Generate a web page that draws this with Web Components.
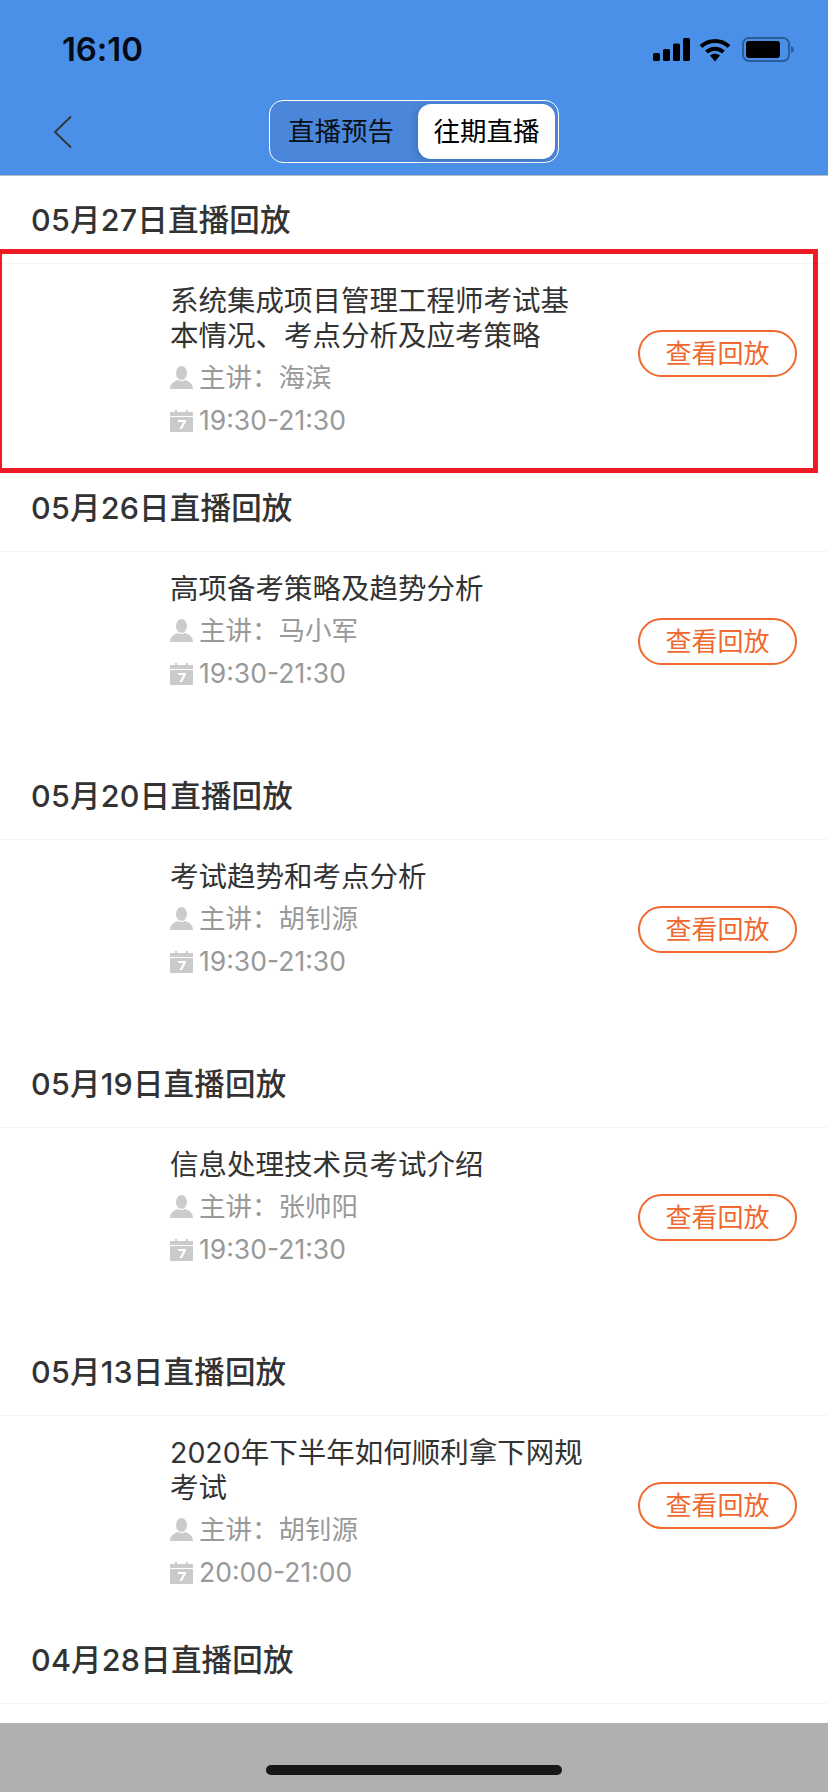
<!DOCTYPE html>
<html lang="zh">
<head>
<meta charset="utf-8">
<title>往期直播</title>
<style>
html,body{margin:0;padding:0;background:#fff}
body{font-family:"Noto Sans CJK SC",sans-serif}
</style>
</head>
<body>
<replay-page>
    <replay-section date="05月27日直播回放" teacher="海滨" time="19:30-21:30">系统集成项目管理工程师考试基本情况、考点分析及应考策略</replay-section>
    <replay-section date="05月26日直播回放" teacher="马小军" time="19:30-21:30">高项备考策略及趋势分析</replay-section>
    <replay-section date="05月20日直播回放" teacher="胡钊源" time="19:30-21:30">考试趋势和考点分析</replay-section>
    <replay-section date="05月19日直播回放" teacher="张帅阳" time="19:30-21:30">信息处理技术员考试介绍</replay-section>
    <replay-section date="05月13日直播回放" teacher="胡钊源" time="20:00-21:00">2020年下半年如何顺利拿下网规考试</replay-section>
    <replay-section date="04月28日直播回放" empty></replay-section>
</replay-page>
<script>
const FONT = `Inter,"Noto Sans CJK SC",sans-serif`;

class StatusBar extends HTMLElement {
    constructor() {
        super();
        this.attachShadow({ mode: 'open' }).innerHTML = `
        <style>
        :host{display:flex;height:88px;align-items:center;justify-content:space-between;padding:11px 34px 0 62px;box-sizing:border-box}
        .time{font:600 33px/77px ${FONT};color:#050a14;letter-spacing:-.1px}
        .icons{display:flex;align-items:center}
        svg{display:block}
        </style>
        <span class="time">16:10</span>
        <span class="icons">
            <svg width="37" height="23" viewBox="0 0 37 23" fill="#000" style="margin-right:9px">
                <rect x="0" y="15" width="7" height="8" rx="1.5"/>
                <rect x="10" y="11" width="7" height="12" rx="1.5"/>
                <rect x="20" y="5.500" width="7" height="17.500" rx="1.5"/>
                <rect x="30" y="0" width="7" height="23" rx="1.5"/>
            </svg>
            <svg width="32" height="24" viewBox="0 0 32 24" fill="none" stroke="#000" stroke-width="4" style="margin-right:11px">
                <path d="M2 8.500C10 1 22 1 30 8.500"/>
                <path d="M7.500 14C12.500 9.500 19.500 9.500 24.500 14"/>
                <path d="M11 17.500L16 23.500L21 17.500C18 15 14 15 11 17.500Z" fill="#000" stroke="none"/>
            </svg>
            <svg width="52" height="25" viewBox="0 0 52 25">
                <rect x="1" y="1" width="46" height="23" rx="6" fill="none" stroke="#2a5c9c" stroke-width="2"/>
                <rect x="4" y="4" width="34" height="17" rx="3" fill="#000"/>
                <path d="M49 9C51 9.700 52 11 52 12.500C52 14 51 15.300 49 16Z" fill="#2a5c9c"/>
            </svg>
        </span>`;
    }
}

class NavTabs extends HTMLElement {
    constructor() {
        super();
        this.attachShadow({ mode: 'open' }).innerHTML = `
        <style>
        :host{display:block;position:relative;height:87px}
        .back{position:absolute;left:53px;top:27px;display:block}
        .tabs{position:absolute;left:269px;top:12px;width:290px;height:63px;box-sizing:border-box;
            border:1px solid #fff;border-radius:14px;background:#4a87da;display:flex;align-items:center;padding:0 3px 0 0}
        .tab{font:400 26.500px/55px ${FONT};color:#0b0f16;text-align:center}
        .tab.off{flex:1;padding-right:6px}
        .tab.on{width:137px;height:55px;background:#fff;border-radius:13px;box-shadow:-3px 2px 6px rgba(40,70,120,.25);color:#000}
        </style>
        <svg class="back" width="20" height="34" viewBox="0 0 20 34" fill="none" stroke="#333" stroke-width="1.800"><path d="M18 1.500L2 17L18 32.500"/></svg>
        <div class="tabs"><span class="tab off">直播预告</span><span class="tab on">往期直播</span></div>`;
    }
}

class ReplayButton extends HTMLElement {
    constructor() {
        super();
        this.attachShadow({ mode: 'open' }).innerHTML = `
        <style>
        :host{display:block;width:159px;height:47px;box-sizing:border-box;border:2px solid #f0692e;border-radius:24px;
            font:400 26px/43px ${FONT};color:#f0692e;text-align:center}
        </style><slot></slot>`;
    }
}

class ReplaySection extends HTMLElement {
    constructor() {
        super();
        this.attachShadow({ mode: 'open' }).innerHTML = `
        <style>
        :host{display:block;height:288px;box-sizing:border-box}
        .head{height:87px;box-sizing:border-box;padding:0 0 0 31px;
            font:500 30.500px/88px ${FONT};color:#333;letter-spacing:.2px}
        .body{border-top:1px solid #f5f5f5;height:200px;box-sizing:border-box;display:flex;padding:19px 31px 0 170px}
        .info{width:420px}
        .title{font:400 28.500px/35px ${FONT};color:#333}
        .row{display:flex;align-items:center;height:42px;font:400 26.500px/42px ${FONT};color:#999}
        .row svg{flex:none;margin-right:6px}
        .speaker{margin-top:3px;margin-bottom:1px}
        replay-button{margin-left:auto;flex:none;margin-top:47px}
        </style>
        <div class="head"></div>
        <div class="body">
            <div class="info">
                <div class="title"><slot></slot></div>
                <div class="row speaker">
                    <svg width="23" height="23" viewBox="0 0 23 23" fill="#cbcbcb"><ellipse cx="11.500" cy="7" rx="5.500" ry="7"/><path d="M0 23C0 17.500 4 15.500 8 14C10 15.500 13 15.500 15 14C19 15.500 23 17.500 23 23Z"/></svg>
                    <span class="teacher"></span>
                </div>
                <div class="row">
                    <svg width="23" height="23" viewBox="0 0 23 23"><path d="M1 3H5V1H7V3H16V1H18V3H22C22.600 3 23 3.400 23 4V7H0V4C0 3.400 .4 3 1 3ZM0 8H23V22C23 22.600 22.600 23 22 23H1C.4 23 0 22.600 0 22Z" fill="#cbcbcb"/><path d="M8 11H16V12.500L12 20H9.500L13.300 13H8Z" fill="#fff"/></svg>
                    <span class="time"></span>
                </div>
            </div>
            <replay-button>查看回放</replay-button>
        </div>`;
    }

    connectedCallback() {
        const sr = this.shadowRoot;
        sr.querySelector('.head').textContent = this.getAttribute('date');
        sr.querySelector('.teacher').textContent = '主讲：' + (this.getAttribute('teacher') || '');
        sr.querySelector('.time').textContent = this.getAttribute('time') || '';
        if (this.hasAttribute('empty')) {
            sr.querySelector('.info').remove();
            sr.querySelector('replay-button').remove();
        }
    }
}

class ReplayPage extends HTMLElement {
    constructor() {
        super();
        this.attachShadow({ mode: 'open' }).innerHTML = `
        <style>
        :host{display:flex;flex-direction:column;height:1792px;position:relative;overflow:hidden;background:#fff}
        header{flex:none;height:176px;box-sizing:border-box;background:#4a90e9;border-bottom:1px solid #bcbcbc}
        main{flex:1;min-height:0;overflow:hidden}
        footer{flex:none;height:69px;background:#b0b0b0;display:flex;justify-content:center}
        .home{width:296px;height:10px;border-radius:5px;background:#171717;margin-top:42px}
        .mark{position:absolute;left:-3px;top:249px;width:821px;height:224px;box-sizing:border-box;border:5px solid #ed1c24;pointer-events:none}
        </style>
        <header><status-bar></status-bar><nav-tabs></nav-tabs></header>
        <main><slot></slot></main>
        <footer><div class="home"></div></footer>
        <div class="mark"></div>`;
    }
}

customElements.define('status-bar', StatusBar);
customElements.define('nav-tabs', NavTabs);
customElements.define('replay-button', ReplayButton);
customElements.define('replay-section', ReplaySection);
customElements.define('replay-page', ReplayPage);
</script>
</body>
</html>
